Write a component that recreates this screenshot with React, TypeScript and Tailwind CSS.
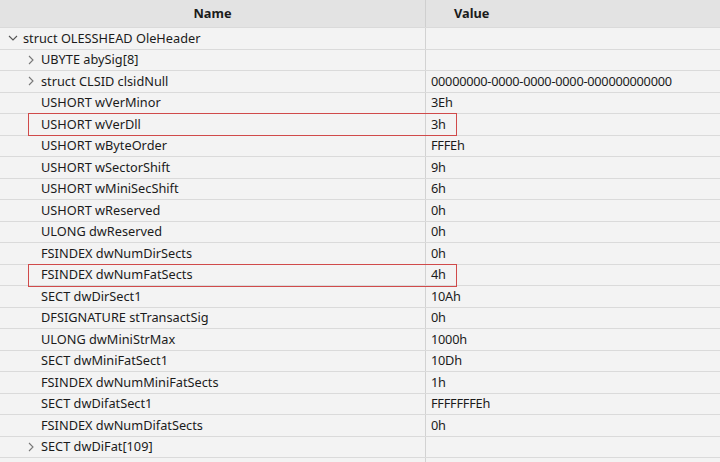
import React from "react";

type Row = {
  name: string;
  value?: string;
  depth: number;
  chevron?: "open" | "closed";
  marked?: boolean;
};

const rows: Row[] = [
  { name: "struct OLESSHEAD OleHeader", depth: 0, chevron: "open" },
  { name: "UBYTE abySig[8]", depth: 1, chevron: "closed" },
  { name: "struct CLSID clsidNull", value: "00000000-0000-0000-0000-000000000000", depth: 1, chevron: "closed" },
  { name: "USHORT wVerMinor", value: "3Eh", depth: 1 },
  { name: "USHORT wVerDll", value: "3h", depth: 1, marked: true },
  { name: "USHORT wByteOrder", value: "FFFEh", depth: 1 },
  { name: "USHORT wSectorShift", value: "9h", depth: 1 },
  { name: "USHORT wMiniSecShift", value: "6h", depth: 1 },
  { name: "USHORT wReserved", value: "0h", depth: 1 },
  { name: "ULONG dwReserved", value: "0h", depth: 1 },
  { name: "FSINDEX dwNumDirSects", value: "0h", depth: 1 },
  { name: "FSINDEX dwNumFatSects", value: "4h", depth: 1, marked: true },
  { name: "SECT dwDirSect1", value: "10Ah", depth: 1 },
  { name: "DFSIGNATURE stTransactSig", value: "0h", depth: 1 },
  { name: "ULONG dwMiniStrMax", value: "1000h", depth: 1 },
  { name: "SECT dwMiniFatSect1", value: "10Dh", depth: 1 },
  { name: "FSINDEX dwNumMiniFatSects", value: "1h", depth: 1 },
  { name: "SECT dwDifatSect1", value: "FFFFFFFEh", depth: 1 },
  { name: "FSINDEX dwNumDifatSects", value: "0h", depth: 1 },
  { name: "SECT dwDiFat[109]", depth: 1, chevron: "closed" },
  { name: "", depth: 1 },
];

function Chevron({ open }: { open: boolean }) {
  return (
    <svg width="10" height="10" viewBox="0 0 10 10" className="shrink-0">
      {open ? (
        <path d="M1 3 L5 7 L9 3" fill="none" stroke="#555" strokeWidth="1.1" />
      ) : (
        <path d="M3 1 L7 5 L3 9" fill="none" stroke="#777" strokeWidth="1.1" />
      )}
    </svg>
  );
}

export default function App() {
  return (
    <div
      className="h-[462px] w-[720px] overflow-hidden bg-[#f3f3f3] text-[12.75px] text-[#1b1b1b]"
      style={{ fontFamily: '"Noto Sans", "Open Sans", sans-serif' }}
    >
      <div className="flex h-[27px] bg-[#e3e3e3] font-bold">
        <div className="flex w-[426px] items-center justify-center border-r border-[#cfcfcf]">
          Name
        </div>
        <div className="flex flex-1 items-center pl-[28px]">Value</div>
      </div>
      {rows.map((r, i) => (
        <div
          key={i}
          className="relative flex h-[21.5px] shrink-0 border-t border-[#dadada] leading-none"
        >
          <div className="flex w-[426px] items-center border-r border-[#d2d2d2]">
            <div className={r.depth === 0 ? "w-[23px] pl-[8px]" : "w-[41px] pl-[26px]"}>
              {r.chevron && <Chevron open={r.chevron === "open"} />}
            </div>
            <span className="whitespace-nowrap">{r.name}</span>
          </div>
          <div className="flex flex-1 items-center pl-[5px] whitespace-nowrap tracking-[-0.25px]">
            {r.value}
          </div>
          {r.marked && (
            <div className="pointer-events-none absolute left-[28px] top-[-1px] z-10 h-[23px] w-[429px] border border-[#d04a4a]" />
          )}
        </div>
      ))}
    </div>
  );
}
